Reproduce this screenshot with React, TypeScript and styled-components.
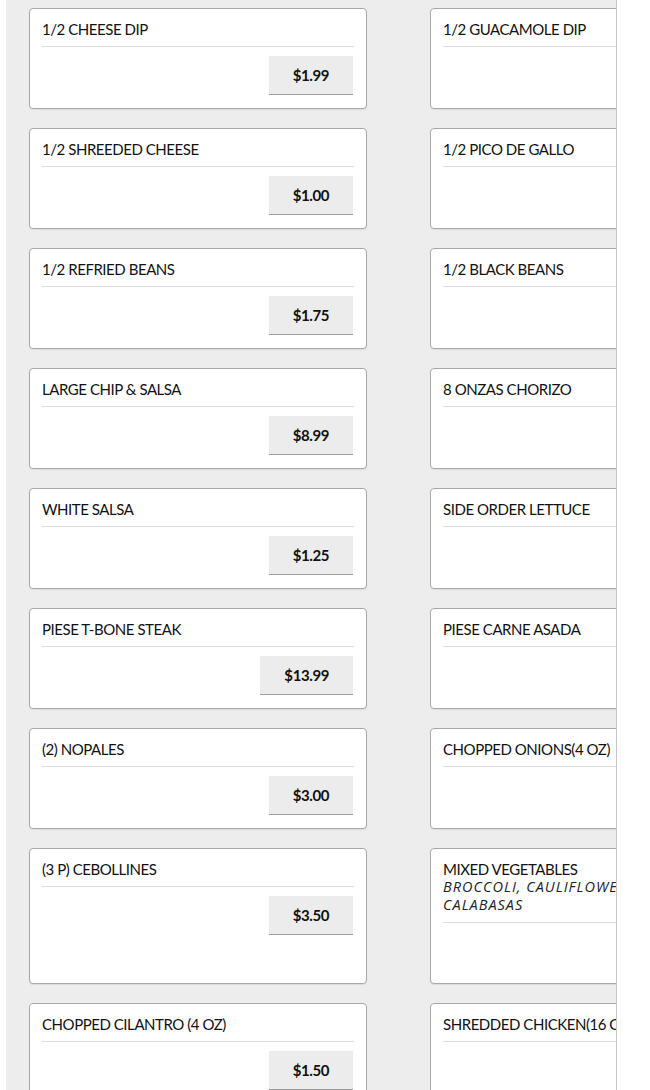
import React from "react";
import styled, { createGlobalStyle } from "styled-components";

interface Item {
  name: string;
  price: string;
  description?: string;
}

const items: Item[] = [
  { name: "1/2 CHEESE DIP", price: "$1.99" },
  { name: "1/2 GUACAMOLE DIP", price: "$2.50" },
  { name: "1/2 SHREEDED CHEESE", price: "$1.00" },
  { name: "1/2 PICO DE GALLO", price: "$1.50" },
  { name: "1/2 REFRIED BEANS", price: "$1.75" },
  { name: "1/2 BLACK BEANS", price: "$1.75" },
  { name: "LARGE CHIP & SALSA", price: "$8.99" },
  { name: "8 ONZAS CHORIZO", price: "$4.99" },
  { name: "WHITE SALSA", price: "$1.25" },
  { name: "SIDE ORDER LETTUCE", price: "$1.00" },
  { name: "PIESE T-BONE STEAK", price: "$13.99" },
  { name: "PIESE CARNE ASADA", price: "$8.99" },
  { name: "(2) NOPALES", price: "$3.00" },
  { name: "CHOPPED ONIONS(4 OZ)", price: "$1.50" },
  { name: "(3 P) CEBOLLINES", price: "$3.50" },
  {
    name: "MIXED VEGETABLES",
    price: "$4.99",
    description: "BROCCOLI, CAULIFLOWER, ZUCCHINI, CALABASAS",
  },
  { name: "CHOPPED CILANTRO (4 OZ)", price: "$1.50" },
  { name: "SHREDDED CHICKEN(16 OZ)", price: "$7.99" },
];

export default function App() {
  return (
    <>
      <GlobalStyle />
      <Page>
        <Panel>
          <MenuGrid>
            {items.map((item) => (
              <Card key={item.name}>
                <CardHeader>
                  <Title>{item.name}</Title>
                  {item.description && (
                    <Description>{item.description}</Description>
                  )}
                </CardHeader>
                <PriceRow>
                  <PriceButton>{item.price}</PriceButton>
                </PriceRow>
              </Card>
            ))}
          </MenuGrid>
        </Panel>
      </Page>
    </>
  );
}

const GlobalStyle = createGlobalStyle`
  body {
    margin: 0;
    background: #fff;
    font-family: Lato, "Liberation Sans", sans-serif;
  }
`;

const Page = styled.div`
  padding-left: 6px;
  height: 1090px;
  overflow: hidden;
`;

const Panel = styled.div`
  width: 610px;
  height: 1090px;
  background-color: #ededed;
  border-right: 1px solid #c4c4c4;
  overflow: hidden;
`;

const MenuGrid = styled.div`
  display: grid;
  grid-template-columns: 338px 338px;
  column-gap: 63px;
  row-gap: 19px;
  padding: 8px 23px;
  width: max-content;
`;

const Card = styled.div`
  box-sizing: border-box;
  min-height: 101px;
  background-color: #fff;
  border: 1px solid #a9a9a9;
  border-radius: 4px;
  box-shadow: 0 1px 1px rgba(0, 0, 0, 0.08);
  padding: 11px 12px 12px;
  display: flex;
  flex-direction: column;
`;

const CardHeader = styled.div`
  padding-bottom: 8px;
  border-bottom: 1px solid #dcdcdc;
`;

const Title = styled.div`
  font-size: 15px;
  line-height: 18px;
  color: #111;
  letter-spacing: -0.45px;
`;

const Description = styled.div`
  font-family: "Open Sans", "Liberation Sans", sans-serif;
  font-style: italic;
  font-size: 14.5px;
  line-height: 18px;
  letter-spacing: 1px;
  color: #222;
`;

const PriceRow = styled.div`
  display: flex;
  justify-content: flex-end;
  padding-top: 9px;
  padding-right: 1px;
`;

const PriceButton = styled.button`
  box-sizing: border-box;
  height: 39px;
  padding: 0 24px;
  border: none;
  border-bottom: 1px solid #9e9e9e;
  background-color: #ececec;
  font-family: Lato, "Liberation Sans", sans-serif;
  font-weight: 700;
  font-size: 15px;
  color: #111;
  letter-spacing: -0.4px;
  cursor: pointer;
`;
